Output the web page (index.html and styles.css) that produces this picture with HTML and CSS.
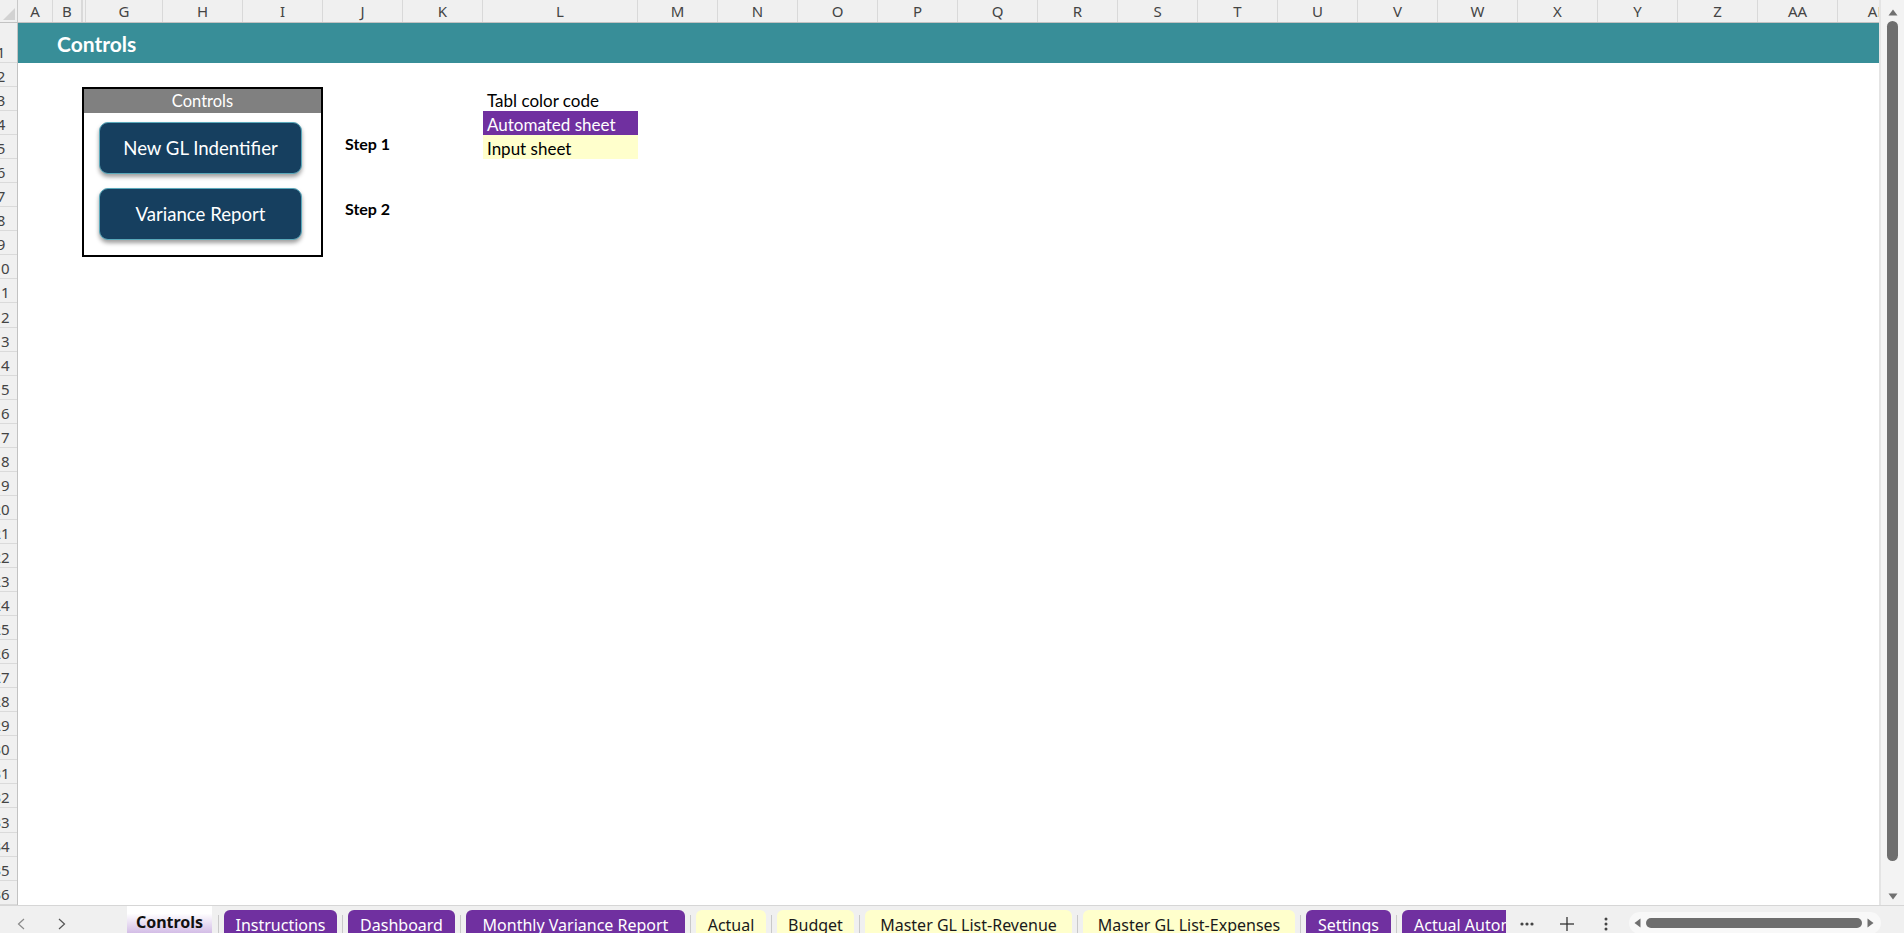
FILE: index.html
```html
<!DOCTYPE html>
<html>
<head>
<meta charset="utf-8">
<link rel="stylesheet" href="styles.css">
</head>
<body>
<div class="app">
  <div class="workspace">
    <div class="grid">
      <div class="colhead">
        <div class="corner"><svg width="18" height="22" viewBox="0 0 18 22"><polygon points="3,20 15,8 15,20" fill="#d2d2d2"/></svg></div>
        <div class="ch a">A</div>
        <div class="ch b">B</div>
        <div class="ch hid"></div>
        <div class="ch g">G</div>
        <div class="ch">H</div>
        <div class="ch">I</div>
        <div class="ch">J</div>
        <div class="ch">K</div>
        <div class="ch l">L</div>
        <div class="ch">M</div>
        <div class="ch">N</div>
        <div class="ch">O</div>
        <div class="ch">P</div>
        <div class="ch">Q</div>
        <div class="ch">R</div>
        <div class="ch">S</div>
        <div class="ch">T</div>
        <div class="ch">U</div>
        <div class="ch">V</div>
        <div class="ch">W</div>
        <div class="ch">X</div>
        <div class="ch">Y</div>
        <div class="ch">Z</div>
        <div class="ch">AA</div>
        <div class="ch">AB</div>
      </div>
      <div class="body">
        <div class="rowhead">
          <div class="rh r1">1</div>
          <div class="rh">2</div>
          <div class="rh">3</div>
          <div class="rh">4</div>
          <div class="rh">5</div>
          <div class="rh">6</div>
          <div class="rh">7</div>
          <div class="rh">8</div>
          <div class="rh">9</div>
          <div class="rh">10</div>
          <div class="rh">11</div>
          <div class="rh">12</div>
          <div class="rh">13</div>
          <div class="rh">14</div>
          <div class="rh">15</div>
          <div class="rh">16</div>
          <div class="rh">17</div>
          <div class="rh">18</div>
          <div class="rh">19</div>
          <div class="rh">20</div>
          <div class="rh">21</div>
          <div class="rh">22</div>
          <div class="rh">23</div>
          <div class="rh">24</div>
          <div class="rh">25</div>
          <div class="rh">26</div>
          <div class="rh">27</div>
          <div class="rh">28</div>
          <div class="rh">29</div>
          <div class="rh">30</div>
          <div class="rh">31</div>
          <div class="rh">32</div>
          <div class="rh">33</div>
          <div class="rh">34</div>
          <div class="rh">35</div>
          <div class="rh">36</div>
        </div>
        <div class="sheet">
          <div class="titlebar">Controls</div>
          <div class="content">
            <div class="ctlbox">
              <div class="ctlhead">Controls</div>
              <div class="ctlbody">
                <div class="btn">New GL Indentifier</div>
                <div class="btn">Variance Report</div>
              </div>
            </div>
            <div class="steps">
              <div class="step">Step 1</div>
              <div class="step">Step 2</div>
            </div>
            <div class="legend">
              <div class="lg-row">Tabl color code</div>
              <div class="lg-row auto">Automated sheet</div>
              <div class="lg-row input">Input sheet</div>
            </div>
          </div>
        </div>
      </div>
    </div>
    <div class="vscroll">
      <svg class="varrow" width="10" height="7" viewBox="0 0 10 7"><polygon points="0.5,6.5 5,0.5 9.5,6.5" fill="#707070"/></svg>
      <div class="vthumb"></div>
      <svg class="varrow down" width="10" height="7" viewBox="0 0 10 7"><polygon points="0.5,0.5 9.5,0.5 5,6.5" fill="#707070"/></svg>
    </div>
  </div>
  <div class="tabbar">
    <div class="nav">
      <svg class="chev" width="8" height="12" viewBox="0 0 8 12"><polyline points="7,1 1.5,6 7,11" fill="none" stroke="#8a8a8a" stroke-width="1.2"/></svg>
      <svg class="chev" width="8" height="12" viewBox="0 0 8 12"><polyline points="1,1 6.5,6 1,11" fill="none" stroke="#555" stroke-width="1.2"/></svg>
    </div>
    <div class="tabs">
      <div class="tab active">Controls</div>
      <div class="sep first"></div>
      <div class="tab purple t-instr">Instructions</div>
      <div class="sep"></div>
      <div class="tab purple t-dash">Dashboard</div>
      <div class="sep"></div>
      <div class="tab purple t-mvr">Monthly Variance Report</div>
      <div class="sep"></div>
      <div class="tab yellow t-actual">Actual</div>
      <div class="sep"></div>
      <div class="tab yellow t-budget">Budget</div>
      <div class="sep"></div>
      <div class="tab yellow t-rev">Master GL List-Revenue</div>
      <div class="sep"></div>
      <div class="tab yellow t-exp">Master GL List-Expenses</div>
      <div class="sep"></div>
      <div class="tab purple t-settings">Settings</div>
      <div class="sep"></div>
      <div class="tab purple t-auto">Actual Automated</div>
    </div>
    <div class="tool more"><svg width="14" height="4" viewBox="0 0 14 4"><circle cx="2" cy="2" r="1.6" fill="#444"/><circle cx="7" cy="2" r="1.6" fill="#444"/><circle cx="12" cy="2" r="1.6" fill="#444"/></svg></div>
    <div class="tool plus"><svg width="14" height="14" viewBox="0 0 14 14"><line x1="7" y1="0" x2="7" y2="14" stroke="#333" stroke-width="1.3"/><line x1="0" y1="7" x2="14" y2="7" stroke="#333" stroke-width="1.3"/></svg></div>
    <div class="tool kebab"><svg width="4" height="14" viewBox="0 0 4 14"><circle cx="2" cy="2" r="1.5" fill="#444"/><circle cx="2" cy="7" r="1.5" fill="#444"/><circle cx="2" cy="12" r="1.5" fill="#444"/></svg></div>
    <div class="hscroll">
      <svg width="7" height="10" viewBox="0 0 7 10"><polygon points="6.5,0.5 6.5,9.5 0.5,5" fill="#707070"/></svg>
      <div class="hthumb"></div>
      <svg width="7" height="10" viewBox="0 0 7 10"><polygon points="0.5,0.5 0.5,9.5 6.5,5" fill="#707070"/></svg>
    </div>
  </div>
</div>
</body>
</html>
```

FILE: styles.css
```css
* { box-sizing: border-box; margin: 0; padding: 0; }
html, body { width: 1904px; height: 933px; overflow: hidden; background: #fff; }
body { font-family: "Noto Sans", "Liberation Sans", sans-serif; color: #000; }

.app { width: 1904px; height: 933px; display: flex; flex-direction: column; }
.workspace { height: 905px; display: flex; flex: none; }
.grid { width: 1879px; flex: none; display: flex; flex-direction: column; }

/* column headers */
.colhead { height: 23px; flex: none; display: flex; background: #f0f0f0; border-bottom: 1px solid #c2c2c2; overflow: hidden; }
.corner { width: 18px; flex: none; border-right: 1px solid #c8c8c8; }
.corner svg { display: block; }
.ch { flex: none; width: 80px; border-right: 1px solid #d9d9d9; text-align: center; font-size: 15px; line-height: 22px; color: #444; white-space: nowrap; }
.ch.a { width: 35px; }
.ch.b { width: 29px; }
.ch.hid { width: 4px; border-left: 1px solid #d9d9d9; }
.ch.g { width: 77px; }
.ch.l { width: 155px; }

/* body */
.body { flex: 1; display: flex; min-height: 0; }
.rowhead { width: 18px; flex: none; background: #f0f0f0; border-right: 1px solid #c2c2c2; overflow: hidden; display: flex; flex-direction: column; }
.rh { flex: none; height: 24.06px; width: 36px; margin-left: -17px; border-bottom: 1px solid #dadada; display: flex; align-items: flex-end; justify-content: center; font-size: 15px; line-height: 20px; color: #444; }
.rh.r1 { height: 40px; }

.sheet { flex: 1; background: #fff; overflow: hidden; }
.titlebar { height: 40px; background: #388e98; color: #fff; font-family: Lato, "Noto Sans", sans-serif; font-weight: 700; font-size: 21px; line-height: 40px; padding-left: 39px; padding-top: 1px; }

.content { display: flex; align-items: flex-start; padding: 24px 0 0 64px; }

.ctlbox { width: 241px; height: 170px; flex: none; border: 2px solid #000; display: flex; flex-direction: column; }
.ctlhead { height: 24px; flex: none; background: #808080; color: #fff; font-family: Lato, sans-serif; font-size: 16.5px; line-height: 24px; text-align: center; }
.ctlbody { flex: 1; display: flex; flex-direction: column; gap: 14px; padding: 9px 19px 0 15px; }
.btn { height: 52px; flex: none; background: #163f5f; border: 1.5px solid #5aa9bb; border-radius: 9px; box-shadow: 0 3px 4px rgba(0, 0, 0, 0.38); color: #fff; font-family: Lato, sans-serif; font-size: 18.6px; display: flex; align-items: center; justify-content: center; }

.steps { width: 138px; flex: none; margin-left: 22px; padding-top: 48px; display: flex; flex-direction: column; gap: 47px; font-family: Lato, sans-serif; font-weight: 700; font-size: 16px; line-height: 18px; }

.legend { width: 155px; flex: none; font-family: Lato, sans-serif; font-size: 17px; }
.lg-row { height: 24.06px; line-height: 21px; padding: 3px 0 0 4px; white-space: nowrap; }
.lg-row.auto { background: #7030a0; color: #fff; }
.lg-row.input { background: #ffffcc; }

/* vertical scrollbar */
.vscroll { width: 25px; flex: none; background: #f3f3f3; border-left: 2px solid #e4e4e4; display: flex; flex-direction: column; align-items: center; padding: 9px 0 5px; }
.varrow { flex: none; display: block; }
.vthumb { flex: 1; width: 11px; margin: 5px 0 32px; background: #6e6e6e; border-radius: 6px; }

/* sheet tabs */
.tabbar { height: 28px; flex: none; display: flex; background: #f0f0f0; border-top: 1px solid #d6d6d6; overflow: hidden; }
.nav { width: 125px; flex: none; display: flex; align-items: flex-start; padding: 12px 0 0 17px; gap: 33px; }
.chev { display: block; }
.tabs { width: 1381px; flex: none; display: flex; align-items: flex-start; overflow: hidden; }
.tab { flex: none; height: 26px; white-space: nowrap; font-size: 16px; line-height: 20px; text-align: center; overflow: hidden; }
.tab.active { width: 85px; margin: -1px 0 0 2px; height: 28px; padding-top: 7px; font-weight: 700; background: linear-gradient(#ffffff 30%, #d3bde6); color: #111; }
.tab.purple, .tab.yellow { margin-top: 4px; padding-top: 5px; border-radius: 6px 6px 0 0; }
.tab.purple { background: #7030a0; color: #fff; }
.tab.yellow { background: #ffffcc; color: #1a1a1a; }
.t-instr { width: 113px; }
.t-dash { width: 107px; }
.t-mvr { width: 219px; }
.t-actual { width: 70px; }
.t-budget { width: 77px; }
.t-rev { width: 207px; }
.t-exp { width: 212px; }
.t-settings { width: 85px; }
.tab.t-auto { width: 140px; text-align: left; padding-left: 12px; }
.sep { flex: none; width: 1px; height: 18px; margin: 9px 5px 0; background: #c9c9c9; }
.sep.first { margin-left: 6px; }

.tool { flex: none; display: flex; justify-content: center; align-items: flex-start; }
.tool svg { display: block; }
.more { width: 42px; padding-top: 16px; }
.plus { width: 38px; padding-top: 11px; }
.kebab { width: 40px; padding-top: 11px; }
.hscroll { width: 252px; flex: none; margin: 6px 0 0 3px; height: 22px; border-radius: 11px; background: #f8f8f8; display: flex; align-items: center; padding: 0 7px 0 5px; gap: 5px; }
.hscroll svg { display: block; flex: none; }
.hthumb { flex: 1; height: 10px; border-radius: 5px; background: #6e6e6e; }
```
